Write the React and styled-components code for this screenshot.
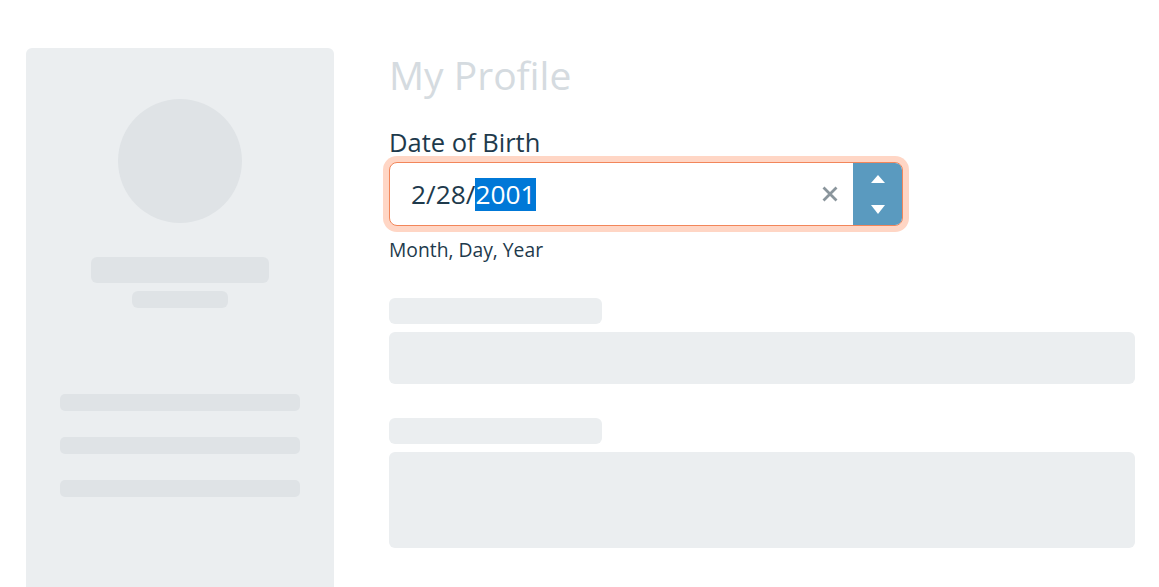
import styled, { createGlobalStyle } from 'styled-components';

const Global = createGlobalStyle`
  html, body {
    margin: 0;
    padding: 0;
    background: #ffffff;
    font-family: "Open Sans", "Noto Sans", sans-serif;
  }
`;

const Page = styled.div`
  display: grid;
  grid-template-columns: 308px 1fr;
  column-gap: 55px;
  padding: 48px 24px 0 26px;
  height: 587px;
  box-sizing: border-box;
  overflow: hidden;
`;

const Sidebar = styled.aside`
  background: #ebeef0;
  border-radius: 6px 6px 0 0;
  height: 560px;
  display: flex;
  flex-direction: column;
  align-items: center;
  padding-top: 51px;
  box-sizing: border-box;
`;

const Avatar = styled.div`
  width: 124px;
  height: 124px;
  border-radius: 50%;
  background: #dfe3e6;
`;

const Bone = styled.div`
  width: ${p => p.w}px;
  height: ${p => p.h}px;
  border-radius: ${p => p.r || 6}px;
  background: ${p => p.tone || '#dfe3e6'};
  margin-top: ${p => p.mt || 0}px;
  flex-shrink: 0;
`;

const Main = styled.main`
  display: flex;
  flex-direction: column;
`;

const Heading = styled.h1`
  margin: 0;
  font-size: 39px;
  font-weight: 400;
  line-height: 52px;
  color: #d5dbe0;
  margin-top: 1px;
`;

const Label = styled.div`
  font-size: 25.5px;
  line-height: 30px;
  color: #1e3a4c;
  margin-top: 26px;
`;

const FieldWrap = styled.div`
  margin-top: 5px;
  width: 514px;
  height: 64px;
  box-sizing: border-box;
  border: 1px solid #f2865a;
  border-radius: 8px;
  box-shadow: 0 0 0 6px #ffd6c5;
  display: flex;
  align-items: stretch;
  background: #fff;
  overflow: hidden;
`;

const Value = styled.div`
  flex: 1;
  display: flex;
  align-items: center;
  padding-left: 21px;
  font-size: 26.3px;
  color: #1e3a4c;
  white-space: pre;
`;

const Selected = styled.span`
  background: #0078d7;
  color: #ffffff;
  line-height: 33px;
`;

const Clear = styled.button`
  border: 0;
  background: transparent;
  padding: 0;
  width: 46px;
  display: flex;
  align-items: center;
  justify-content: center;
  cursor: pointer;
`;

const Stepper = styled.div`
  width: 49px;
  background: #5a9abf;
  display: flex;
  flex-direction: column;
  align-items: center;
  justify-content: center;
  gap: 22px;
`;

const Hint = styled.div`
  margin-top: 12px;
  font-size: 19.3px;
  line-height: 24px;
  color: #1e3a4c;
`;

const Group = styled.div`
  display: flex;
  flex-direction: column;
  gap: 8px;
  margin-top: ${p => p.mt}px;
`;

export default function App() {
  return (
    <>
      <Global />
      <Page>
        <Sidebar>
          <Avatar />
          <Bone w={178} h={26} mt={34} />
          <Bone w={96} h={17} mt={8} />
          <Bone w={240} h={17} r={5} mt={86} />
          <Bone w={240} h={17} r={5} mt={26} />
          <Bone w={240} h={17} r={5} mt={26} />
        </Sidebar>
        <Main>
          <Heading>My Profile</Heading>
          <Label>Date of Birth</Label>
          <FieldWrap>
            <Value>2/28/<Selected>2001</Selected></Value>
            <Clear aria-label="Clear">
              <svg width="16" height="16" viewBox="0 0 16 16">
                <path d="M1.5 1.5 L14.5 14.5 M14.5 1.5 L1.5 14.5" stroke="#8a959c" strokeWidth="2.8" />
              </svg>
            </Clear>
            <Stepper>
              <svg width="14" height="8" viewBox="0 0 14 8"><path d="M7 0 L14 8 L0 8 Z" fill="#fff" /></svg>
              <svg width="14" height="9" viewBox="0 0 14 9"><path d="M0 0 L14 0 L7 9 Z" fill="#fff" /></svg>
            </Stepper>
          </FieldWrap>
          <Hint>Month, Day, Year</Hint>
          <Group mt={36}>
            <Bone w={213} h={26} tone="#ebeef0" />
            <Bone w={746} h={52} tone="#ebeef0" />
          </Group>
          <Group mt={34}>
            <Bone w={213} h={26} tone="#ebeef0" />
            <Bone w={746} h={96} tone="#ebeef0" />
          </Group>
        </Main>
      </Page>
    </>
  );
}
